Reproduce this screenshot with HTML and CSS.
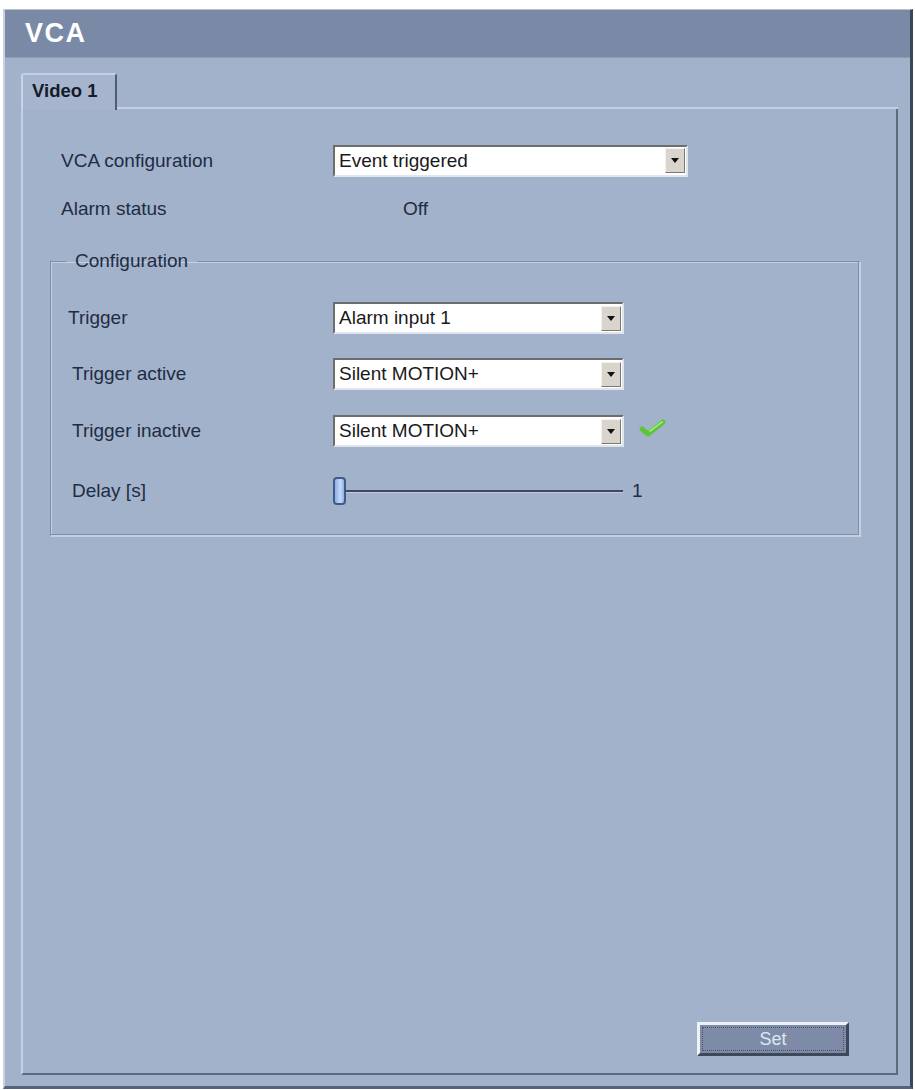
FILE: index.html
```html
<!DOCTYPE html>
<html>
<head>
<meta charset="utf-8">
<link rel="stylesheet" href="styles.css">
</head>
<body>
<div class="frame">
  <div class="header">VCA</div>
  <div class="main">
    <div class="tabs"><div class="tab">Video 1</div><div class="tabline"></div></div>
    <div class="panel">
      <div class="row r1">
        <div class="label">VCA configuration</div>
        <div class="select wide"><span>Event triggered</span><span class="btn"><i></i></span></div>
      </div>
      <div class="row r2">
        <div class="label">Alarm status</div>
        <div class="value">Off</div>
      </div>
      <fieldset class="config">
        <legend>Configuration</legend>
        <div class="row f1">
          <div class="label l0">Trigger</div>
          <div class="select"><span>Alarm input 1</span><span class="btn"><i></i></span></div>
        </div>
        <div class="row f2">
          <div class="label">Trigger active</div>
          <div class="select"><span>Silent MOTION+</span><span class="btn"><i></i></span></div>
        </div>
        <div class="row f3">
          <div class="label">Trigger inactive</div>
          <div class="select"><span>Silent MOTION+</span><span class="btn"><i></i></span></div>
          <svg class="check" width="30" height="22" viewBox="0 0 30 22"><path d="M4 12 L10 17 L25 5" fill="none" stroke="#5cc43a" stroke-width="5" stroke-linecap="round" stroke-linejoin="round"/><path d="M12 14 L24 5" fill="none" stroke="#9be872" stroke-width="2" stroke-linecap="round"/></svg>
        </div>
        <div class="row f4">
          <div class="label">Delay [s]</div>
          <div class="slider"><span class="thumb"></span><span class="track"></span></div>
          <div class="sval">1</div>
        </div>
      </fieldset>
      <div class="spacer"></div>
      <div class="actions"><button class="set">Set</button></div>
    </div>
  </div>
</div>
</body>
</html>
```
FILE: styles.css
```css
* { box-sizing: border-box; }
html, body { margin: 0; padding: 0; background: #ffffff; }
body { font-family: "Liberation Sans", Arial, sans-serif; color: #1f2c42; }

.frame {
  margin: 9px 0 0 3px;
  width: 910px;
  height: 1080px;
  display: flex;
  flex-direction: column;
  border-left: 2px solid #c8d2e2;
  border-right: 3px solid #3b4659;
  border-bottom: 3px solid #56637a;
  border-top: 1px solid #b8c3d4;
  background: #a3b2cb;
}
.header {
  height: 48px;
  background: #7a8aa6;
  color: #ffffff;
  font-weight: bold;
  font-size: 27px;
  letter-spacing: 1.5px;
  padding: 8px 0 0 20px;
  border-bottom: 1px solid #8e9cb6;
}
.main {
  flex: 1;
  display: flex;
  flex-direction: column;
  padding: 14px 12px 11px 16px;
}
.tabs { display: flex; align-items: flex-end; height: 37px; }
.tab {
  width: 96px;
  height: 37px;
  border-left: 2px solid #cad4e4;
  border-top: 2px solid #c4cfe0;
  border-right: 2px solid #4f5c72;
  border-radius: 3px 3px 0 0;
  background: #a6b4cd;
  font-weight: bold;
  font-size: 18.5px;
  color: #141c2a;
  padding: 5px 0 0 9px;
  margin-bottom: -1px;
  position: relative;
  z-index: 1;
}
.tabline { flex: 1; border-bottom: 2px solid #c4cfe0; }
.panel {
  flex: 1;
  display: flex;
  flex-direction: column;
  border-left: 2px solid #c6d0e1;
  border-right: 2px solid #5d6a80;
  border-bottom: 2px solid #5d6a80;
  padding: 35px 0 0 0;
}
.row { display: flex; align-items: center; }
.label { font-size: 19px; color: #1f2c42; }
.r1 { padding-left: 38px; height: 33px; }
.r1 .label { width: 272px; }
.r2 { padding-left: 38px; margin-top: 21px; height: 22px; }
.r2 .label { width: 342px; }
.value { font-size: 19px; }

.select {
  width: 291px;
  height: 32px;
  background: #ffffff;
  border-top: 2px solid #6d6d6d;
  border-left: 2px solid #6d6d6d;
  border-right: 2px solid #dfe5ef;
  border-bottom: 2px solid #dfe5ef;
  display: flex;
  align-items: center;
  justify-content: space-between;
  font-size: 19px;
  color: #1a1a1a;
  padding-left: 4px;
}
.select.wide { width: 355px; }
.btn {
  width: 20px;
  height: 25px;
  background: #d9d5cd;
  border-left: 1px solid #f4f2ee;
  border-top: 1px solid #f4f2ee;
  border-right: 1px solid #7c7870;
  border-bottom: 1px solid #7c7870;
  margin-right: 1px;
  display: flex;
  align-items: center;
  justify-content: center;
}
.btn i {
  width: 0; height: 0;
  border-left: 4px solid transparent;
  border-right: 4px solid transparent;
  border-top: 5px solid #111;
}

.config {
  margin: 30px 35px 0 27px;
  padding: 30px 0 28px 17px;
  border: none;
  border-top: 1px solid #7f8da6;
  border-left: 1px solid #7f8da6;
  border-right: 2px solid #c5cfdf;
  border-bottom: 2px solid #c5cfdf;
  box-shadow: inset -1px -1px 0 #7f8da6, 1px 1px 0 #c5cfdf inset;
  min-width: 0;
}
.config legend {
  font-size: 19px;
  padding: 0 9px;
  margin-left: -2px;
  color: #1f2c42;
}
.config .label { width: 265px; padding-left: 4px; }
.config .label.l0 { padding-left: 0; }
.config .row { height: 32px; }
.f2 { margin-top: 24px; }
.f3 { margin-top: 25px; }
.f4 { margin-top: 28px; height: 30px; }
.check { margin-left: 14px; margin-top: -6px; }

.slider { display: flex; align-items: center; width: 290px; }
.thumb {
  width: 13px; height: 28px;
  border: 2px solid #3f5a8c;
  border-radius: 4px;
  background: linear-gradient(to right, #8fb0e6, #c7d8f5 60%, #93b1e0);
}
.track {
  flex: 1;
  height: 3px;
  background: #3e4660;
  border-bottom: 1px solid #c2cadb;
}
.sval { font-size: 19px; margin-left: 9px; }

.spacer { flex: 1; }
.actions { display: flex; justify-content: flex-end; padding: 0 47px 17px 0; }
.set {
  width: 152px;
  height: 34px;
  background: #7d8ba7;
  border-top: 3px solid #eef2f8;
  border-left: 3px solid #eef2f8;
  border-right: 3px solid #3f485a;
  border-bottom: 3px solid #3f485a;
  outline: 1px dotted #4a5468;
  outline-offset: -6px;
  color: #dfe6f2;
  font-family: "Liberation Sans", Arial, sans-serif;
  font-size: 18px;
  padding: 0;
}
```
